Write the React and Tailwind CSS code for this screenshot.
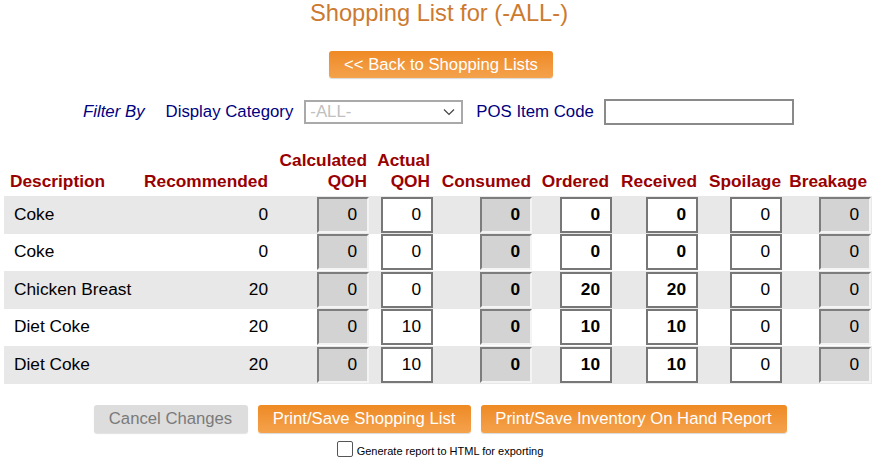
import React from "react";

const rows = [
  { d: "Coke", r: 0, c: 0, a: 0, co: 0, o: 0, re: 0, s: 0, b: 0 },
  { d: "Coke", r: 0, c: 0, a: 0, co: 0, o: 0, re: 0, s: 0, b: 0 },
  { d: "Chicken Breast", r: 20, c: 0, a: 0, co: 0, o: 20, re: 20, s: 0, b: 0 },
  { d: "Diet Coke", r: 20, c: 0, a: 10, co: 0, o: 10, re: 10, s: 0, b: 0 },
  { d: "Diet Coke", r: 20, c: 0, a: 10, co: 0, o: 10, re: 10, s: 0, b: 0 },
];

function Dis({ v, bold }) {
  return (
    <div
      className={
        "w-[52px] h-[36px] bg-[#d3d3d3] border-2 border-t-[#7d7d7d] border-l-[#7d7d7d] border-r-[#f4f4f4] border-b-[#f4f4f4] flex items-center justify-end pr-[10px] text-[17.3px] text-black " +
        (bold ? "font-bold" : "")
      }
    >
      {v}
    </div>
  );
}

function Inp({ v, bold }) {
  return (
    <div
      className={
        "w-[52px] h-[36px] bg-white border-2 border-[#777777] flex items-center justify-end pr-[10px] text-[17.3px] text-black " +
        (bold ? "font-bold" : "")
      }
    >
      {v}
    </div>
  );
}

const grid =
  "grid grid-cols-[134px_134px_99px_64px_100px_79px_86px_84px_88px]";

export default function App() {
  return (
    <div
      className="w-[888px] h-[459px] bg-white relative"
      style={{ fontFamily: '"Liberation Sans", Arial, sans-serif' }}
    >
      <div className="text-center text-[23.7px] leading-[27px] pr-[10px] text-[#cc7a30]">
        Shopping List for (-ALL-)
      </div>
      <div className="flex justify-center mt-[24px] pr-[6px]">
        <div className="w-[224px] h-[27px] rounded-[3px] bg-gradient-to-b from-[#ee8a22] to-[#f4a24c] text-white text-[16.7px] flex items-center justify-center shadow-[0_1px_1px_rgba(0,0,0,0.15)]">
          &lt;&lt; Back to Shopping Lists
        </div>
      </div>
      <div className="flex items-center mt-[21px] h-[26px] text-[16.8px] text-[#000080]">
        <span className="ml-[83px] italic">Filter By</span>
        <span className="ml-[21px]">Display Category</span>
        <div className="ml-[11px] w-[159px] h-[24px] border-2 border-[#a9a9a9] flex items-center justify-between px-[4px] text-[#c0c0c0]">
          <span>-ALL-</span>
          <svg width="12" height="8" viewBox="0 0 12 8" className="mr-[2px]">
            <path d="M1 1.5 L6 6.5 L11 1.5" fill="none" stroke="#444" strokeWidth="1.2" />
          </svg>
        </div>
        <span className="ml-[13px]">POS Item Code</span>
        <div className="ml-[10px] w-[190px] h-[26px] border-2 border-[#8a8a8a] bg-white" />
      </div>
      <div className="ml-[4px] mt-[25px] w-[868px] text-[17.3px]">
        <div className={grid + " h-[46px] items-end pb-[6px] font-bold text-[#990000] leading-[21px]"}>
          <div className="pl-[6px]">Description</div>
          <div className="text-right pr-[4px]">Recommended</div>
          <div className="text-right pr-[4px]">Calculated<br />QOH</div>
          <div className="text-right pr-[5px]">Actual<br />QOH</div>
          <div className="text-right pr-[4px]">Consumed</div>
          <div className="text-right pr-[5px]">Ordered</div>
          <div className="text-right pr-[3px]">Received</div>
          <div className="text-right pr-[3px]">Spoilage</div>
          <div className="text-right pr-[5px]">Breakage</div>
        </div>
        {rows.map((r, i) => (
          <div
            key={i}
            className={
              grid +
              " h-[37.5px] items-center " +
              (i % 2 === 0 ? "bg-[#e8e8e8]" : "bg-white")
            }
          >
            <div className="pl-[10px] text-black">{r.d}</div>
            <div className="text-right pr-[4px] text-black">{r.r}</div>
            <div className="flex justify-end pr-[2px]"><Dis v={r.c} /></div>
            <div className="flex justify-end pr-[2px]"><Inp v={r.a} /></div>
            <div className="flex justify-end pr-[3px]"><Dis v={r.co} bold /></div>
            <div className="flex justify-end pr-[2px]"><Inp v={r.o} bold /></div>
            <div className="flex justify-end pr-[2px]"><Inp v={r.re} bold /></div>
            <div className="flex justify-end pr-[2px]"><Inp v={r.s} /></div>
            <div className="flex justify-end pr-[1px]"><Dis v={r.b} /></div>
          </div>
        ))}
      </div>
      <div className="flex justify-center gap-[10px] mt-[21px] pr-[8px]">
        <div className="w-[154px] h-[28px] rounded-[3px] bg-[#dddddd] text-[#7a7a7a] text-[16.7px] flex items-center justify-center shadow-[0_1px_1px_rgba(0,0,0,0.12)]">
          Cancel Changes
        </div>
        <div className="w-[213px] h-[28px] rounded-[3px] bg-gradient-to-b from-[#ee8a22] to-[#f4a24c] text-white text-[16.7px] flex items-center justify-center shadow-[0_1px_1px_rgba(0,0,0,0.15)]">
          Print/Save Shopping List
        </div>
        <div className="w-[306px] h-[28px] rounded-[3px] bg-gradient-to-b from-[#ee8a22] to-[#f4a24c] text-white text-[16.7px] flex items-center justify-center shadow-[0_1px_1px_rgba(0,0,0,0.15)]">
          Print/Save Inventory On Hand Report
        </div>
      </div>
      <div className="flex items-end justify-center mt-[8px] pr-[8px]">
        <div className="w-[16px] h-[16px] border border-[#555] bg-white rounded-[2px]" />
        <span className="ml-[4px] text-[11px] leading-[12px] text-black">
          Generate report to HTML for exporting
        </span>
      </div>
    </div>
  );
}
